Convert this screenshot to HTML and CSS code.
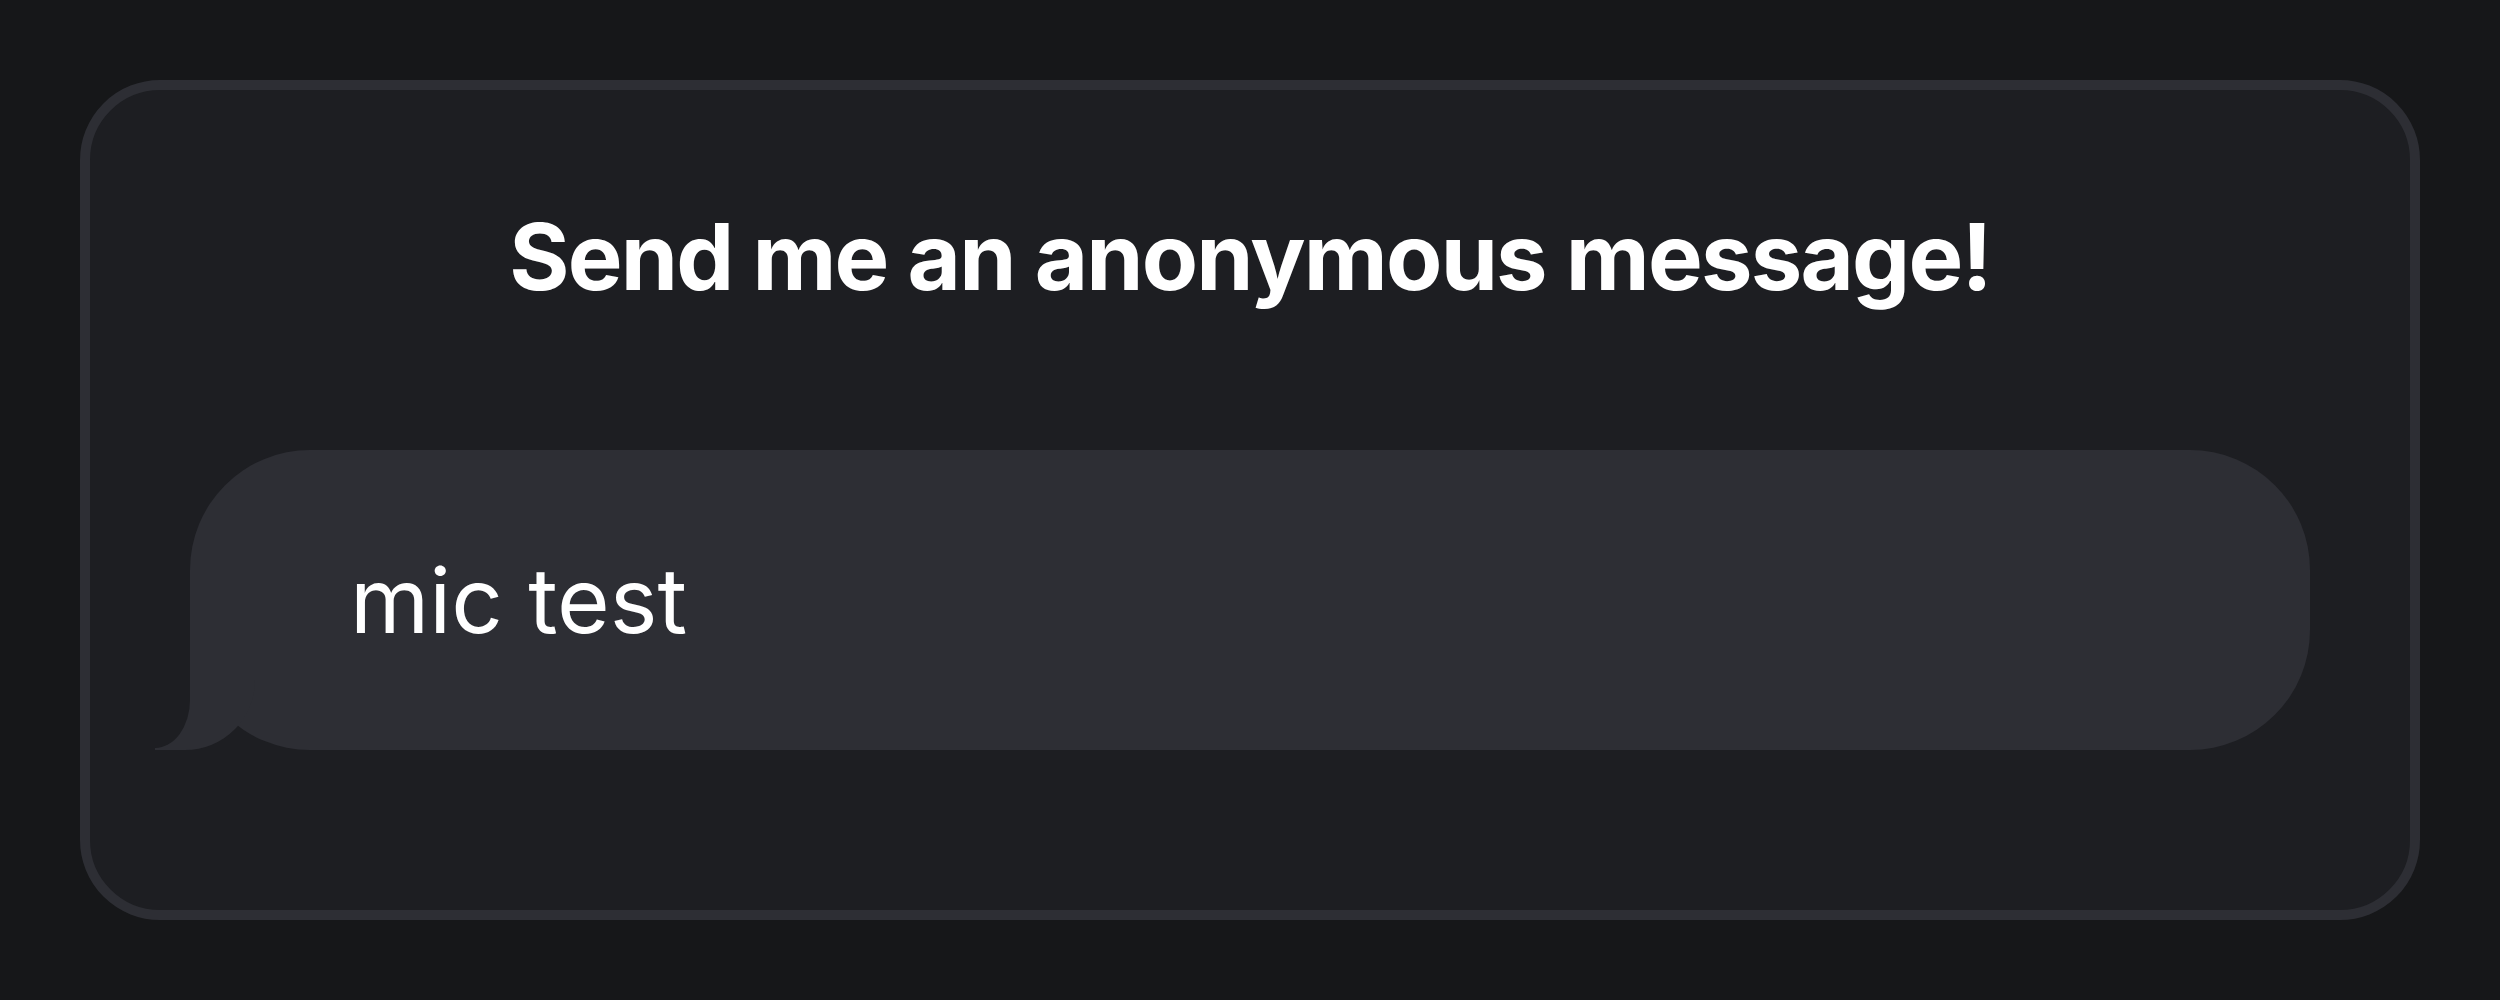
FILE: index.html
```html
<!DOCTYPE html>
<html lang="en">
<head>
<meta charset="utf-8">
<title>Anonymous message</title>
<link rel="stylesheet" href="styles.css">
</head>
<body>
  <main class="card">
    <h1 class="title">Send me an anonymous message!</h1>
    <div class="bubble">
      <p class="bubble-text">mic test</p>
    </div>
  </main>
</body>
</html>
```
FILE: styles.css
```css
html, body {
  margin: 0;
  padding: 0;
}
body {
  background: #161719;
  padding: 80px;
  font-family: Inter, "Noto Sans", "Liberation Sans", sans-serif;
  color: #ffffff;
  box-sizing: border-box;
  height: 1000px;
}
.card {
  box-sizing: border-box;
  height: 840px;
  background: #1d1e22;
  border: 10px solid #2d2e34;
  border-radius: 80px;
  padding: 111px 100px 0;
  display: flex;
  flex-direction: column;
}
.title {
  margin: 0;
  text-align: center;
  font-size: 92px;
  font-weight: 700;
  line-height: 111px;
  letter-spacing: -1.8px;
}
.bubble {
  position: relative;
  margin-top: 138px;
  height: 300px;
  background: #2d2e34;
  border-radius: 120px;
  display: flex;
  align-items: center;
  padding-left: 160px;
}
.bubble::before {
  content: "";
  position: absolute;
  left: -35px;
  bottom: 0;
  width: 100px;
  height: 130px;
  background: #2d2e34;
  border-bottom-right-radius: 70px;
}
.bubble::after {
  content: "";
  position: absolute;
  left: -90px;
  bottom: 2px;
  width: 90px;
  height: 128px;
  background: #1d1e22;
  border-bottom-right-radius: 35px 48px;
}
.bubble-text {
  margin: 0;
  font-size: 90.5px;
  font-weight: 400;
  line-height: 1;
  position: relative;
  z-index: 1;
}
```
